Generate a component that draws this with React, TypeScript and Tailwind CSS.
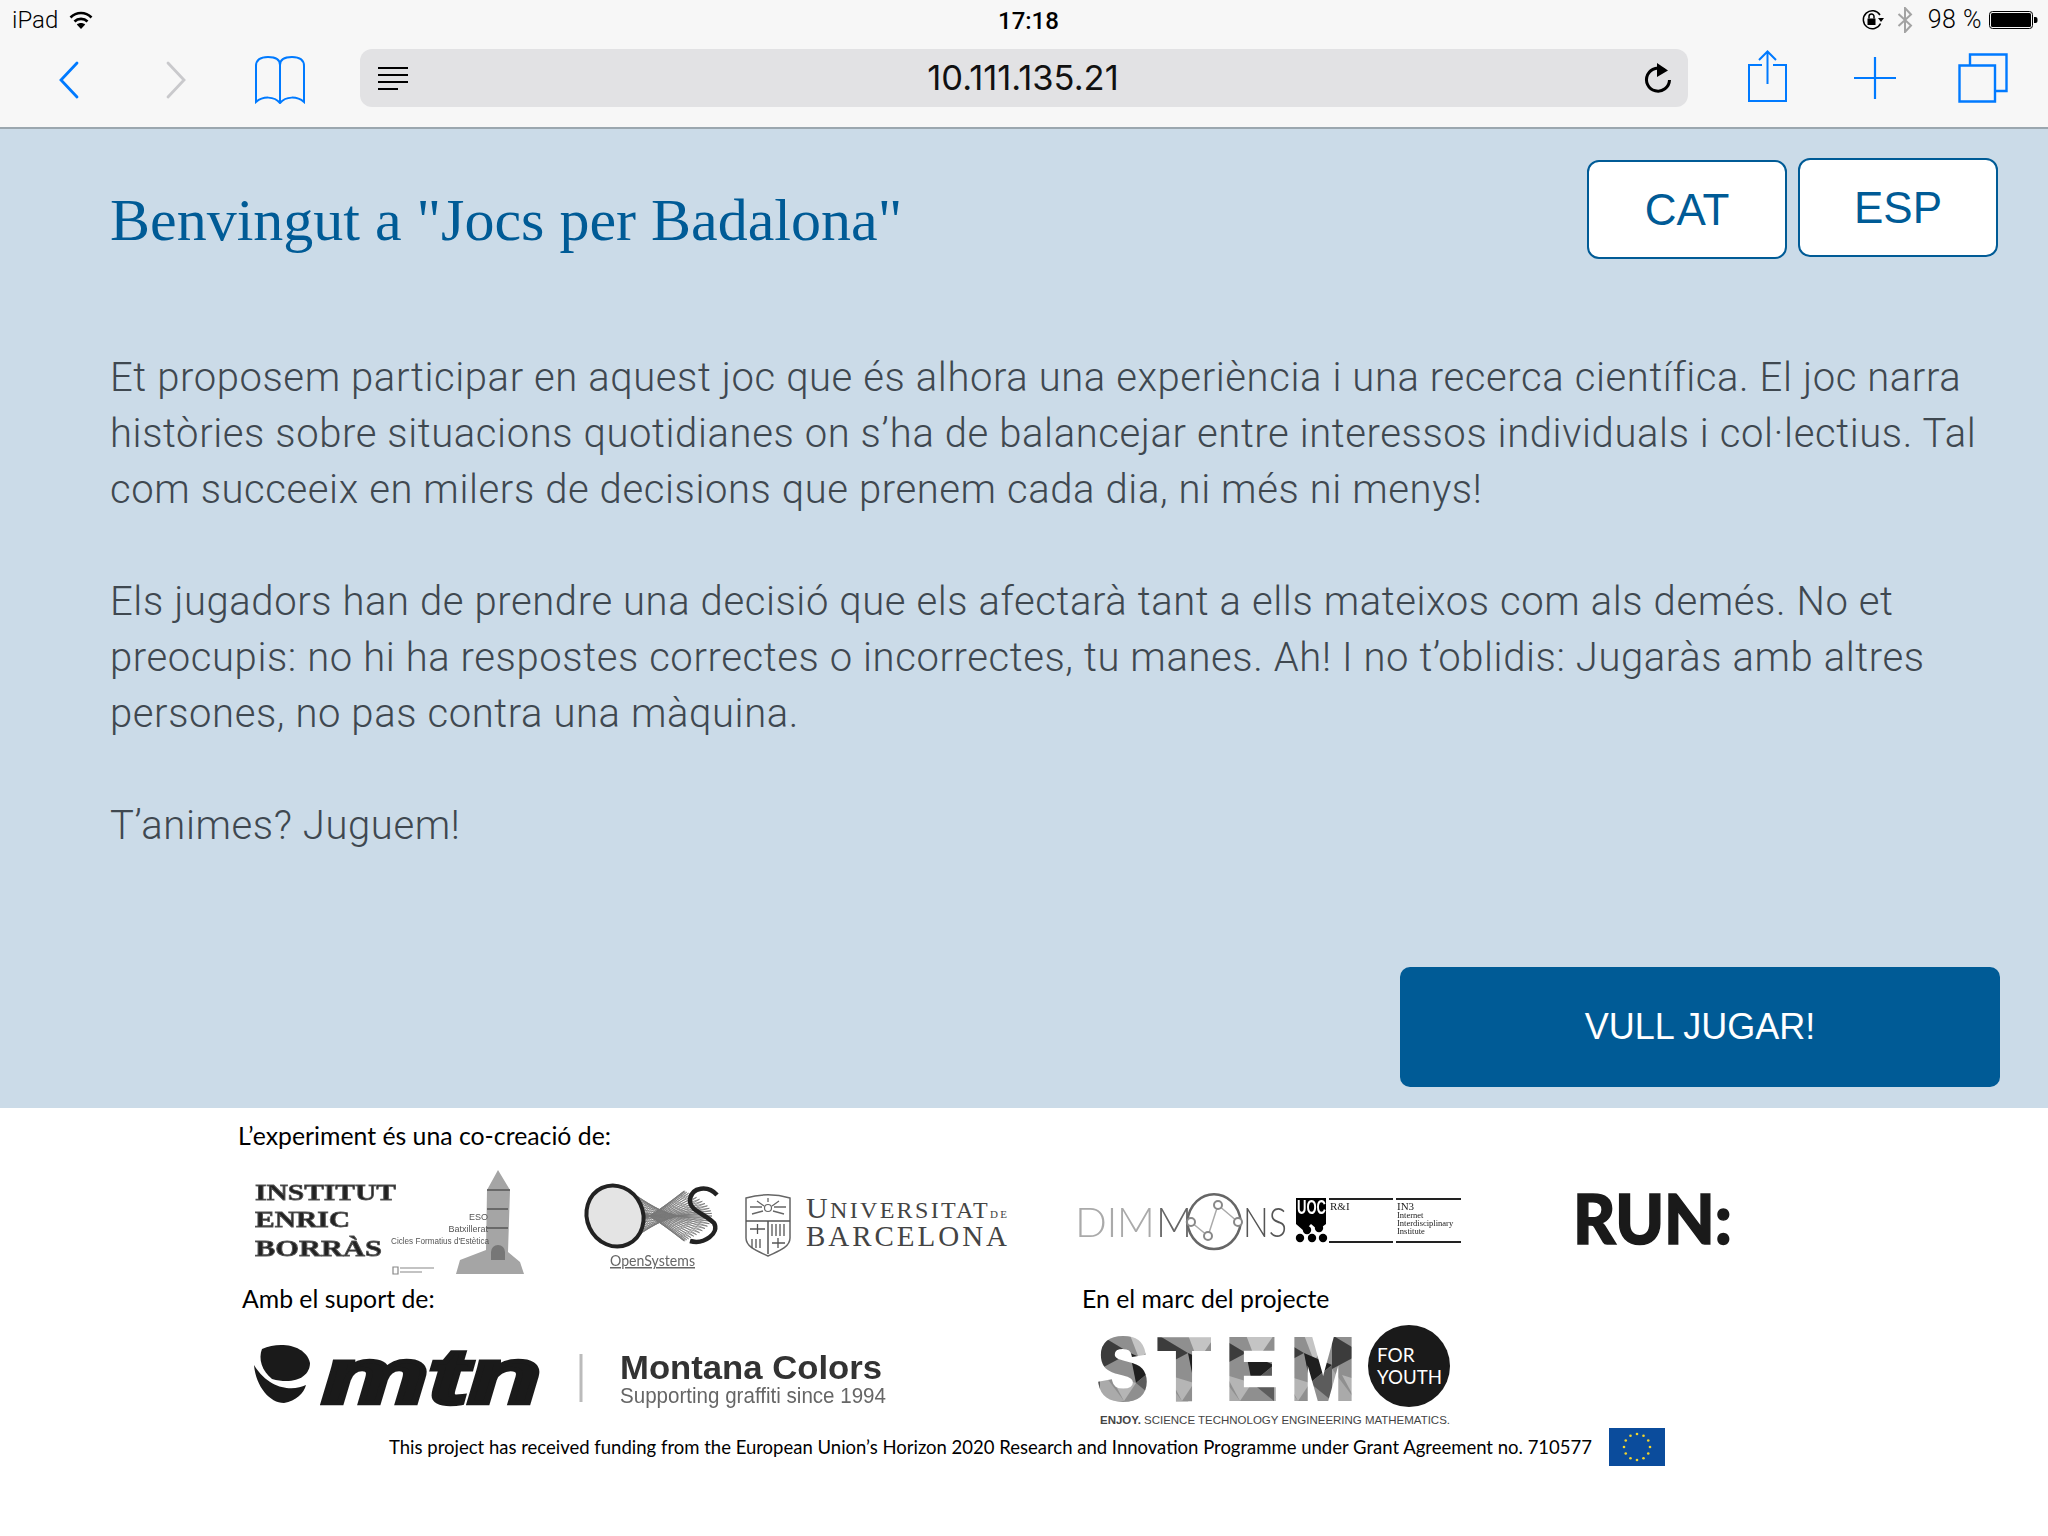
const BLUE = "#007aff";

const StatusBar = () => (
  <div className="relative flex h-[40px] items-center justify-between pl-[12px] pr-[7px] text-[24px] text-black font-['Roboto',sans-serif] font-light">
    <div className="flex items-center gap-[11px]">
      <span>iPad</span>
      <svg width="24" height="20" viewBox="0 0 24 20" fill="none" stroke="#000" strokeWidth="2.6">
        <path d="M1.5 7.5C7.5 1.5 16.5 1.5 22.5 7.5" />
        <path d="M5.5 11.5C9 8 15 8 18.5 11.5" />
        <path d="M12 19L7.8 14.6C10 12.6 14 12.6 16.2 14.6Z" fill="#000" stroke="none" />
      </svg>
    </div>
    <span className="absolute left-[998px] top-[8px] font-medium text-[24px] leading-[26px]">17:18</span>
    <div className="flex items-center">
      <svg width="24" height="22" viewBox="0 0 24 22" fill="none" className="mr-[12px]">
        <path d="M19.5 14.5A9 9 0 1 1 19 6" stroke="#000" strokeWidth="1.5" />
        <path d="M17 9h6l-3 4z" fill="#000" />
        <rect x="6.5" y="9.5" width="8" height="6.5" fill="#000" />
        <path d="M8 9.5V7.5a2.5 2.5 0 0 1 5 0v2" stroke="#000" strokeWidth="1.5" />
      </svg>
      <svg width="16" height="26" viewBox="0 0 16 26" fill="none" stroke="#a3a3a3" strokeWidth="2" className="mr-[15px]">
        <path d="M1.5 7L14 18.5L8 25V1L14 7.5L1.5 19" />
      </svg>
      <span className="mr-[7px] text-[25px] tracking-[0.5px]">98 %</span>
      <svg width="52" height="18" viewBox="0 0 52 18">
        <rect x="0.5" y="0.5" width="43" height="17" rx="3" fill="none" stroke="#000" />
        <rect x="2" y="2" width="40" height="14" rx="1.5" fill="#000" />
        <path d="M45 6h1.500a2 2 0 0 1 2 2v2a2 2 0 0 1-2 2H45z" fill="#000" />
      </svg>
    </div>
  </div>
);

const Toolbar = () => (
  <div className="flex h-[89px] items-start border-b-[2px] border-[#9ba7af] bg-[#f7f7f7]">
    <svg width="20" height="38" viewBox="0 0 20 38" fill="none" stroke={BLUE} strokeWidth="2.8" strokeLinecap="round" className="ml-[59px] mt-[21px]">
      <path d="M18 2L2 19L18 36" />
    </svg>
    <svg width="20" height="38" viewBox="0 0 20 38" fill="none" stroke="#c9c9cc" strokeWidth="2.8" strokeLinecap="round" className="ml-[87px] mt-[21px]">
      <path d="M2 2L18 19L2 36" />
    </svg>
    <svg width="52" height="48" viewBox="0 0 52 48" fill="none" stroke={BLUE} strokeWidth="2" className="ml-[68px] mt-[16px]">
      <path d="M26 9C26 3 21 1 14 1C6 1 2 4 2 10V46C9 40 20 40 26 47C32 40 43 40 50 46V10C50 4 46 1 38 1C31 1 26 3 26 9V47" />
    </svg>
    <div className="ml-[54px] mt-[9px] flex h-[58px] w-[1328px] items-center justify-between rounded-[12px] bg-[#e2e2e4] pl-[18px] pr-[16px]">
      <svg width="30" height="23" viewBox="0 0 30 23" stroke="#000" strokeWidth="2">
        <path d="M0 1H30M0 8H30M0 15H30M0 22H20" />
      </svg>
      <span className="mr-[6px] text-[34.5px] leading-[58px] text-[#111] font-['Inter',sans-serif] font-normal">10.111.135.21</span>
      <svg width="28" height="32" viewBox="0 0 28 32" fill="none">
        <path d="M21 8.500A11.500 11.500 0 1 0 25.500 18" stroke="#000" strokeWidth="3" />
        <path d="M13 1L24 8.500L13 15z" fill="#000" />
      </svg>
    </div>
    <svg width="40" height="52" viewBox="0 0 40 52" fill="none" stroke={BLUE} strokeWidth="2" className="ml-[60px] mt-[10px]">
      <path d="M14 15H1V51H38V15H25M19.500 34V2M11 10L19.500 1.500L28 10" />
    </svg>
    <svg width="42" height="42" viewBox="0 0 42 42" stroke={BLUE} strokeWidth="2.200" className="ml-[66px] mt-[17px]">
      <path d="M0 21H42M21 0V42" />
    </svg>
    <svg width="50" height="50" viewBox="0 0 50 50" fill="none" stroke={BLUE} strokeWidth="2.400" className="ml-[62px] mt-[13px]">
      <path d="M1.500 12.500H37V48.500H1.500zM12 12V1.500H48.500V38H38" />
    </svg>
  </div>
);

const InstitutLogo = () => (
  <svg width="280" height="115" viewBox="250 1165 280 115" className="overflow-visible blur-[0.5px]">
    <g fontFamily="'Liberation Serif',serif" fontWeight="700" fontSize="24" fill="#222" stroke="#555" strokeWidth="0.8">
      <text x="255" y="1200" textLength="141" lengthAdjust="spacingAndGlyphs">INSTITUT</text>
      <text x="255" y="1227" textLength="95" lengthAdjust="spacingAndGlyphs">ENRIC</text>
      <text x="255" y="1256" textLength="127" lengthAdjust="spacingAndGlyphs">BORRÀS</text>
    </g>
    <path d="M498 1170L510 1190L508 1252L520 1262L524 1274H456L460 1260L486 1250L487 1190Z" fill="#a5a5a5" />
    <path d="M487 1209H508M487 1228H508M487 1190H510" stroke="#555" strokeWidth="1.500" />
    <path d="M491 1252a7 7 0 0 1 14 0v8h-14z" fill="#777" />
    <g fontFamily="'Liberation Sans',sans-serif" fontSize="9" fill="#555">
      <text x="488" y="1220" textAnchor="end">ESO</text>
      <text x="488" y="1232" textAnchor="end">Batxillerat</text>
      <text x="391" y="1244" textLength="98" lengthAdjust="spacingAndGlyphs">Cicles Formatius d'Estètica</text>
    </g>
    <path d="M393 1267h5v7h-5zM400 1268h34M400 1272h22" stroke="#888" strokeWidth="1.200" fill="none" />
  </svg>
);

// fan of thin lines that gives the tube its moire look
const tubeLines = Array.from({ length: 60 }).map((_, i) => {
  const a = (i / 60) * Math.PI * 2;
  const x1 = 615 + 29 * Math.cos(a);
  const y1 = 1218 + 29 * Math.sin(a);
  const x2 = 698 + 14 * Math.cos(a * 2);
  const y2 = 1218 - 25 * Math.sin(a);
  return `M${x1.toFixed(1)} ${y1.toFixed(1)}L${x2.toFixed(1)} ${y2.toFixed(1)}`;
});

const OpenSystemsLogo = () => (
  <svg width="136" height="84" viewBox="584 1183 136 84" fill="none" className="overflow-visible blur-[0.3px]">
    <path d={tubeLines.join("")} stroke="#777" strokeWidth="0.8" />
    <ellipse cx="615" cy="1218" rx="28" ry="31" transform="rotate(-25 615 1218)" fill="#e4e4e4" stroke="#222" strokeWidth="4" />
    <path d="M717 1197C708 1187 692 1189 690 1201C689 1213 704 1215 714 1225C720 1235 704 1247 690 1243" stroke="#222" strokeWidth="4.500" />
    <text x="610" y="1268" fontFamily="'Lato',sans-serif" fontSize="15" fill="#666" stroke="none" textLength="85" lengthAdjust="spacingAndGlyphs" textDecoration="underline">OpenSystems</text>
  </svg>
);

const UbLogo = () => (
  <svg width="266" height="76" viewBox="744 1187 266 76" fill="none" className="overflow-visible">
    <path d="M746 1200C760 1196 776 1196 790 1200V1240C790 1250 776 1254 768 1258C760 1254 746 1250 746 1240Z" stroke="#666" strokeWidth="1.500" />
    <path d="M746 1223H790M768 1223V1256" stroke="#555" strokeWidth="1.500" />
    <circle cx="768" cy="1210" r="3.500" stroke="#666" strokeWidth="1.200" />
    <path d="M768 1200V1204M757 1203L764 1208M779 1203L772 1208M750 1209H762M786 1209H774M752 1216L763 1213M784 1216L773 1213" stroke="#666" strokeWidth="1.300" />
    <path d="M750 1231H765M757.500 1226V1236M772 1226V1238M776 1226V1238M780 1226V1238M784 1226V1238M752 1241V1250M756 1241V1250M760 1241V1250M772 1245H785M778 1240V1250" stroke="#555" strokeWidth="1.300" />
    <g fontFamily="'Liberation Serif',serif" fill="#444">
      <text x="806" y="1220" fontSize="30" textLength="201" lengthAdjust="spacing">
        U<tspan fontSize="24">NIVERSITAT</tspan>
        <tspan fontSize="11">DE</tspan>
      </text>
      <text x="806" y="1248" fontSize="29" textLength="201" lengthAdjust="spacing">BARCELONA</text>
    </g>
  </svg>
);

const DimmonsLogo = () => (
  <svg width="392" height="70" viewBox="1072 1188 392 70" fill="none" className="overflow-visible blur-[0.3px]">
    <g fontFamily="'Lato',sans-serif" fontWeight="300" fontSize="42">
      <text x="1075" y="1237" fill="#aaa" textLength="80" lengthAdjust="spacing">DIM</text>
      <text x="1156" y="1237" fill="#666" textLength="36" lengthAdjust="spacingAndGlyphs">M</text>
      <text x="1243" y="1237" fill="#555" textLength="44" lengthAdjust="spacingAndGlyphs">NS</text>
    </g>
    <path d="M1187 1222C1192 1185 1236 1185 1241 1222C1236 1258 1192 1258 1187 1222" stroke="#666" strokeWidth="2.500" />
    <path d="M1191 1222L1208 1236L1218 1205L1238 1222" stroke="#aaa" strokeWidth="1.500" />
    {[[1191, 1222], [1208, 1236], [1218, 1205], [1238, 1222]].map(([cx, cy]) => (
      <circle key={cx} cx={cx} cy={cy} r="4" fill="#fff" stroke="#888" strokeWidth="2" />
    ))}
    <path d="M1296 1198H1326V1224L1318 1230L1311 1224L1304 1231L1296 1224Z" fill="#000" />
    <text x="1297" y="1214" fontFamily="'Liberation Sans',sans-serif" fontWeight="700" fontSize="20" fill="#fff" textLength="29" lengthAdjust="spacingAndGlyphs">UOC</text>
    {[[1300, 1238], [1312, 1238], [1323, 1238], [1307, 1230], [1319, 1228]].map(([cx, cy]) => (
      <circle key={cx + cy} cx={cx} cy={cy} r="4.200" fill="#000" />
    ))}
    <path d="M1329 1199H1393M1396 1199H1461M1329 1242H1393M1396 1242H1461" stroke="#222" strokeWidth="2" />
    <g fontFamily="'Liberation Serif',serif" fill="#222">
      <text x="1330" y="1210" fontSize="11">R&amp;I</text>
      <text x="1397" y="1210" fontSize="11">IN3</text>
      <text x="1397" y="1218" fontSize="8.500">Internet</text>
      <text x="1397" y="1226" fontSize="8.500">Interdisciplinary</text>
      <text x="1397" y="1234" fontSize="8.500">Institute</text>
    </g>
  </svg>
);

const RunLogo = () => (
  <svg width="162" height="60" viewBox="1573 1189 162 60" className="overflow-visible blur-[0.3px]">
    <text x="1573" y="1240" fontFamily="'Lato',sans-serif" fontWeight="900" fontSize="68" fill="#1a1a1a" stroke="#1a1a1a" strokeWidth="1.500" textLength="159" lengthAdjust="spacingAndGlyphs">RUN:</text>
  </svg>
);

const MontanaLogo = () => (
  <svg width="640" height="100" viewBox="250 1325 640 100" className="overflow-visible blur-[0.3px]">
    <path d="M262 1350C280 1342 306 1346 310 1364C310 1378 294 1386 272 1380C262 1372 258 1360 262 1350Z" fill="#1a1a1a" />
    <path d="M254 1366C256 1388 270 1404 284 1404C296 1402 304 1394 306 1386C294 1392 270 1392 254 1366Z" fill="#1a1a1a" />
    <text x="322" y="1404" fontFamily="'Liberation Sans',sans-serif" fontWeight="700" fontStyle="italic" fontSize="78" fill="#1a1a1a" stroke="#1a1a1a" strokeWidth="4.500" textLength="219" lengthAdjust="spacingAndGlyphs">mtn</text>
    <path d="M581 1355V1403" stroke="#bbb" strokeWidth="3" />
    <text x="620" y="1380" fontFamily="'Liberation Sans',sans-serif" fontWeight="700" fontSize="34" fill="#333" textLength="262" lengthAdjust="spacingAndGlyphs">Montana Colors</text>
    <text x="620" y="1404" fontFamily="'Liberation Sans',sans-serif" fontSize="22" fill="#666" textLength="266" lengthAdjust="spacingAndGlyphs">Supporting graffiti since 1994</text>
  </svg>
);

const StemLogo = () => (
  <svg width="358" height="104" viewBox="1096 1324 358 104" className="overflow-visible">
    <defs>
      <pattern id="facets" patternUnits="userSpaceOnUse" width="58" height="66" x="1100" y="1335">
        <rect width="58" height="66" fill="#8f8f8f" />
        <path d="M0 0L30 18L0 34Z" fill="#3c3c3c" />
        <path d="M30 0L58 0L40 26Z" fill="#c4c4c4" />
        <path d="M30 18L58 30L36 48Z" fill="#1f1f1f" />
        <path d="M0 34L24 66L0 66Z" fill="#aaa" />
        <path d="M36 48L58 30L58 66Z" fill="#5c5c5c" />
        <path d="M10 40L36 48L24 66Z" fill="#b5b5b5" />
      </pattern>
    </defs>
    <g fontFamily="'Liberation Sans',sans-serif" fontWeight="700" fontSize="88" fill="url(#facets)" stroke="url(#facets)" strokeWidth="4">
      <text x="1098" y="1399" textLength="50" lengthAdjust="spacingAndGlyphs">S</text>
      <text x="1158" y="1399" textLength="52" lengthAdjust="spacingAndGlyphs">T</text>
      <text x="1226" y="1399" textLength="51" lengthAdjust="spacingAndGlyphs">E</text>
      <text x="1291" y="1399" textLength="64" lengthAdjust="spacingAndGlyphs">M</text>
    </g>
    <circle cx="1409" cy="1366" r="41" fill="#1a1a1a" />
    <g fontFamily="'Lato',sans-serif" fontSize="19" fill="#fff">
      <text x="1377" y="1362">FOR</text>
      <text x="1377" y="1384" textLength="65" lengthAdjust="spacingAndGlyphs">YOUTH</text>
    </g>
    <text x="1100" y="1424" fontFamily="'Liberation Sans',sans-serif" fontSize="11.500" fill="#444" textLength="350" lengthAdjust="spacingAndGlyphs">
      <tspan fontWeight="700">ENJOY.</tspan> SCIENCE TECHNOLOGY ENGINEERING MATHEMATICS.
    </text>
  </svg>
);

const EuFlag = () => (
  <svg width="56" height="38" viewBox="0 0 56 38">
    <rect width="56" height="38" fill="#0b4c9c" />
    {Array.from({ length: 12 }).map((_, i) => (
      <circle
        key={i}
        cx={28 + 13 * Math.cos((i * Math.PI) / 6)}
        cy={19 + 13 * Math.sin((i * Math.PI) / 6)}
        r="1.300"
        fill="#f4d52a"
      />
    ))}
  </svg>
);

const App = () => {
  return (
    <div className="flex h-[1536px] w-[2048px] flex-col overflow-hidden bg-white">
      <div className="bg-[#f7f7f7]">
        <StatusBar />
        <Toolbar />
      </div>

      <main className="h-[979px] bg-[#cbdbe8] pl-[110px] pr-[48px] font-['Roboto',sans-serif]">
        <div className="flex items-start justify-between pt-[29px]">
          <h1 className="mt-[27px] font-['Liberation_Serif',serif] text-[60px] leading-[70px] text-[#005b96]">
            Benvingut a "Jocs per Badalona"
          </h1>
          <div className="flex items-start gap-[11px] pr-[2px]">
            <button className="mt-[2px] h-[99px] w-[200px] rounded-[12px] border-[2px] border-[#005b96] bg-white font-['Liberation_Sans',sans-serif] text-[44px] text-[#005b96]">
              CAT
            </button>
            <button className="h-[99px] w-[200px] rounded-[12px] border-[2px] border-[#005b96] bg-white font-['Liberation_Sans',sans-serif] text-[44px] text-[#005b96]">
              ESP
            </button>
          </div>
        </div>

        <div className="mt-[91px] text-[40px] font-light leading-[56px] tracking-[0.6px] text-[#3f4850]">
          <p>
            Et proposem participar en aquest joc que és alhora una experiència i una recerca científica. El joc narra
            <br />
            històries sobre situacions quotidianes on s’ha de balancejar entre interessos individuals i col·lectius. Tal
            <br />
            com succeeix en milers de decisions que prenem cada dia, ni més ni menys!
          </p>
          <p className="mt-[56px]">
            Els jugadors han de prendre una decisió que els afectarà tant a ells mateixos com als demés. No et
            <br />
            preocupis: no hi ha respostes correctes o incorrectes, tu manes. Ah! I no t’oblidis: Jugaràs amb altres
            <br />
            persones, no pas contra una màquina.
          </p>
          <p className="mt-[56px]">T’animes? Juguem!</p>
        </div>

        <div className="mt-[113px] flex justify-end">
          <button className="h-[120px] w-[600px] rounded-[10px] bg-[#005b96] font-['Liberation_Sans',sans-serif] text-[36px] text-white">
            VULL JUGAR!
          </button>
        </div>
      </main>

      <footer className="flex-1 pl-[238px] pt-[14px] font-['Lato',sans-serif] text-[24.8px] leading-[28px] text-black">
        <p>L’experiment és una co-creació de:</p>
        <div className="mt-[15px] flex h-[115px] items-center pl-[12px]">
          <InstitutLogo />
          <div className="ml-[54px]"><OpenSystemsLogo /></div>
          <div className="ml-[24px]"><UbLogo /></div>
          <div className="ml-[62px]"><DimmonsLogo /></div>
          <div className="ml-[109px]"><RunLogo /></div>
        </div>
        <div className="mt-[5px] flex pl-[4px]">
          <p className="w-[840px]">Amb el suport de:</p>
          <p>En el marc del projecte</p>
        </div>
        <div className="mt-[11px] flex items-start pl-[12px]">
          <MontanaLogo />
          <div className="ml-[206px]"><StemLogo /></div>
        </div>
        <div className="flex items-center pl-[151px]">
          <span className="text-[18.5px] leading-[38px]">
            This project has received funding from the European Union’s Horizon 2020 Research and Innovation Programme under Grant Agreement no. 710577
          </span>
          <div className="ml-[17px]"><EuFlag /></div>
        </div>
      </footer>
    </div>
  );
};

export default App;
